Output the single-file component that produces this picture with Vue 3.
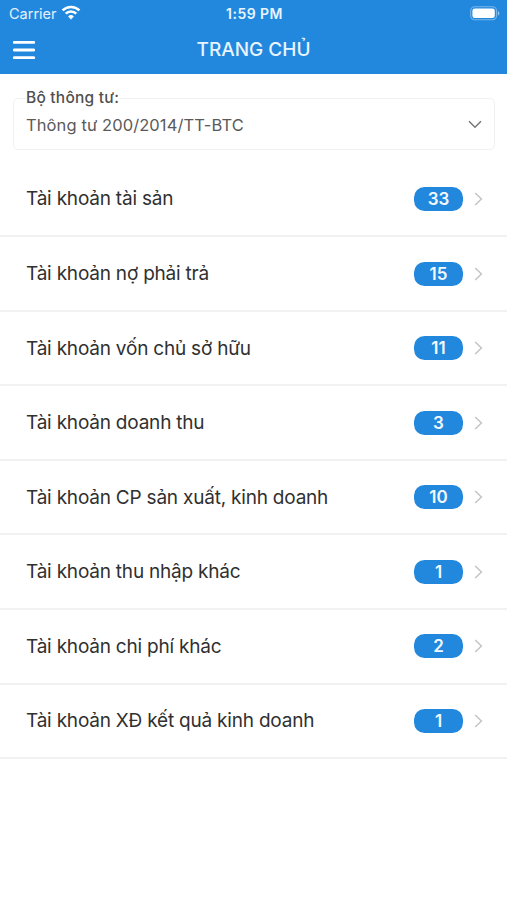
<script setup>
const accounts = [
  { name: 'Tài khoản tài sản', count: 33 },
  { name: 'Tài khoản nợ phải trả', count: 15 },
  { name: 'Tài khoản vốn chủ sở hữu', count: 11 },
  { name: 'Tài khoản doanh thu', count: 3 },
  { name: 'Tài khoản CP sản xuất, kinh doanh', count: 10 },
  { name: 'Tài khoản thu nhập khác', count: 1 },
  { name: 'Tài khoản chi phí khác', count: 2 },
  { name: 'Tài khoản XĐ kết quả kinh doanh', count: 1 },
]
</script>

<template>
  <div class="screen">
    <header class="header">
      <div class="status">
        <div class="carrier">
          <span>Carrier</span>
          <svg width="20" height="15" viewBox="0 0 20 15" fill="none" stroke="#fff" stroke-width="2.6">
            <path d="M1.6 5.4a11.9 11.9 0 0 1 16.8 0" />
            <path d="M4.7 8.7a7.5 7.5 0 0 1 10.6 0" />
            <path d="M7.1 11.4a4.1 4.1 0 0 1 5.8 0L10 14.5z" fill="#fff" stroke="none" />
          </svg>
        </div>
        <span class="time">1:59 PM</span>
        <svg class="battery" width="30" height="15" viewBox="0 0 30 15">
          <rect x="0.7" y="0.7" width="25.8" height="13.1" rx="4" fill="none" stroke="#fff" stroke-opacity="0.4" stroke-width="1.1" />
          <rect x="2.4" y="2.4" width="22.4" height="9.7" rx="2.3" fill="#fff" />
          <path d="M27.9 4.9c2 .8 2 3.9 0 4.7z" fill="#fff" fill-opacity="0.5" />
        </svg>
      </div>
      <div class="nav">
        <svg class="menu" width="22" height="20" viewBox="0 0 22 20" stroke="#fff" stroke-width="2.9" stroke-linecap="round">
          <path d="M1.3 2.4h19.4M1.3 10h19.4M1.3 17.6h19.4" />
        </svg>
        <h1 class="title">TRANG CHỦ</h1>
      </div>
    </header>
    <fieldset class="select">
      <legend>Bộ thông tư:</legend>
      <div class="value">
        <span>Thông tư 200/2014/TT-BTC</span>
        <svg width="14" height="9" viewBox="0 0 14 9" fill="none" stroke="#777" stroke-width="1.5">
          <path d="M1 1.2l6 6 6-6" />
        </svg>
      </div>
    </fieldset>
    <ul class="list">
      <li v-for="item in accounts" :key="item.name" class="row">
        <span class="name">{{ item.name }}</span>
        <span class="badge">{{ item.count }}</span>
        <svg class="chevron" width="9" height="14" viewBox="0 0 9 14" fill="none" stroke="#c4c4c6" stroke-width="1.5">
          <path d="M1.2 1l6.2 6-6.2 6" />
        </svg>
      </li>
    </ul>
  </div>
</template>

<style>
body {
  background: #fff;
}
</style>

<style scoped>
.screen {
  width: 100%;
  height: 900px;
  box-sizing: border-box;
  overflow: hidden;
  background: #fff;
  color: #303030;
  font-family: Inter, "Liberation Sans", sans-serif;
}
.header {
  height: 74px;
  background: #2288dd;
  color: #fff;
}
.status {
  display: grid;
  grid-template-columns: 1fr auto 1fr;
  align-items: center;
  height: 27px;
  padding: 0 7px 0 9px;
}
.carrier {
  display: flex;
  align-items: center;
  gap: 4px;
  font-size: 14.5px;
  color: #e3f1fd;
}
.carrier svg {
  margin-top: -2px;
}
.time {
  font-size: 14px;
  font-weight: 600;
  letter-spacing: 0.45px;
  color: #e8f4ff;
}
.battery {
  justify-self: end;
}
.nav {
  display: grid;
  grid-template-columns: 1fr auto 1fr;
  align-items: center;
  height: 46px;
  padding: 0 13px;
}
.title {
  margin: 0;
  font-size: 19px;
  font-weight: 500;
  line-height: 24px;
  color: #e8f4ff;
}
.select {
  height: 62px;
  box-sizing: border-box;
  margin: 14px 12px 0 13px;
  padding: 0 12px;
  border: 1px solid #f0f0f0;
  border-radius: 5px;
}
.select legend {
  padding: 0;
  height: 20px;
  line-height: 20px;
  font-size: 15.5px;
  font-weight: 500;
  letter-spacing: 0.22px;
  color: #505050;
}
.value {
  display: flex;
  align-items: center;
  justify-content: space-between;
  height: 33px;
  font-size: 16.5px;
  letter-spacing: 0.1px;
  color: #5a5a5a;
}
.list {
  margin: 12.7px 0 0;
  padding: 0;
  list-style: none;
}
.row {
  display: flex;
  align-items: center;
  height: 74.55px;
  box-sizing: border-box;
  padding: 0 24px 0 26px;
  border-bottom: 2px solid #f1f1f1;
}
.name {
  flex: 1;
  font-size: 19px;
  letter-spacing: -0.21px;
  white-space: nowrap;
}
.badge {
  width: 49px;
  height: 24px;
  border-radius: 10.5px;
  background: #2288dd;
  color: #f2f9ff;
  font-size: 17px;
  font-weight: 600;
  line-height: 24px;
  text-align: center;
}
.chevron {
  margin-left: 11px;
}
</style>
